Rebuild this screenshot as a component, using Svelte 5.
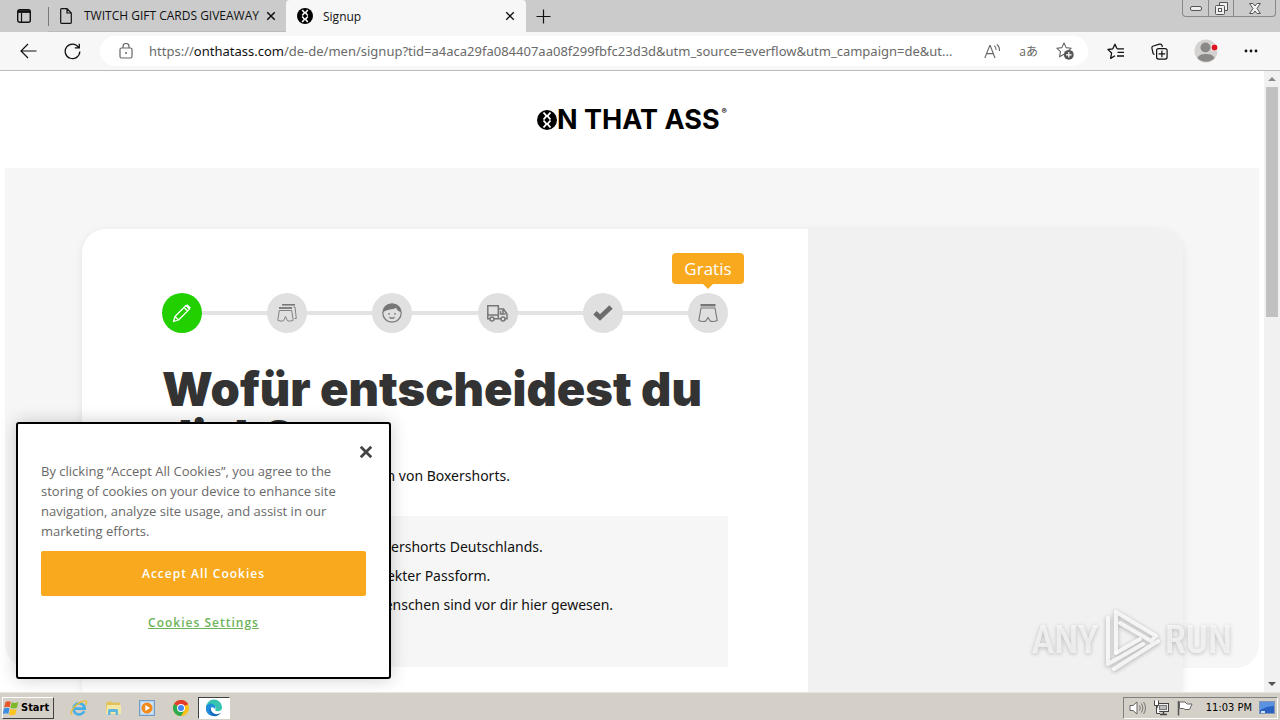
<script>
  const items = [
    'Beliebteste und bequemste Boxershorts Deutschlands.',
    'Nahtlose Verarbeitung mit perfekter Passform.',
    'Mehr als 600.000 zufriedene Menschen sind vor dir hier gewesen.'
  ];
  const steps = ['pencil', 'stack', 'face', 'truck', 'check', 'shorts'];
</script>

{#snippet badge(size)}
  <svg width={size} height={size} viewBox="0 0 20 20" aria-hidden="true">
    <circle cx="10" cy="10" r="10" fill="#000" />
    <path d="M6.500 2.500 9.500 6 6.500 9.500M13.500 2.500 10.500 6 13.500 9.500M6.500 10.500 9.500 14 6.500 17.500M13.500 10.500 10.500 14 13.500 17.500M9 6H11M9 14H11" fill="none" stroke="#fff" stroke-width="1.900" />
  </svg>
{/snippet}

{#snippet cross(size, width)}
  <svg {width} height={width} viewBox="0 0 12 12" aria-hidden="true">
    <path d="M1.5 1.5 10.5 10.5M10.5 1.5 1.5 10.5" stroke="currentColor" stroke-width={size} fill="none" />
  </svg>
{/snippet}

<div class="screen">
  <header class="tabs">
    <button class="icon-btn tab-menu" aria-label="Tab actions">
      <svg width="14" height="14" viewBox="0 0 14 14"><path d="M1 2.600H13" stroke="#111" stroke-width="2.600" /><path d="M4.500 4V13" stroke="#111" stroke-width="1.200" /><rect x=".7" y=".7" width="12.600" height="12.600" rx="2" fill="none" stroke="#111" stroke-width="1.400" /></svg>
    </button>
    <div class="tab idle">
      <svg width="12" height="16" viewBox="0 0 12 16"><path d="M.7 1.5a.8.8 0 0 1 .8-.8H7L11.3 5v9.5a.8.8 0 0 1-.8.8h-9a.8.8 0 0 1-.8-.8zM7 .7V5h4.3" fill="none" stroke="#111" stroke-width="1.2" /></svg>
      <span class="title">TWITCH GIFT CARDS GIVEAWAY</span>
      <button class="icon-btn" aria-label="Close tab">{@render cross(1.8, 10)}</button>
    </div>
    <div class="tab active">
      {@render badge(16)}
      <span class="title">Signup</span>
      <button class="icon-btn" aria-label="Close tab">{@render cross(1.6, 10)}</button>
    </div>
    <button class="icon-btn new-tab" aria-label="New tab">
      <svg width="15" height="15" viewBox="0 0 15 15"><path d="M7.5.5v14M.5 7.5h14" stroke="#111" stroke-width="1.2" /></svg>
    </button>
    <div class="window-controls">
      <button aria-label="Minimize"><svg width="12" height="5" viewBox="0 0 12 5"><rect x=".5" y=".5" width="11" height="4" rx="1.5" fill="#eee" stroke="#555" /></svg></button>
      <button aria-label="Restore"><svg width="13" height="13" viewBox="0 0 13 13"><path d="M4.5 3V.5h8v8H10" fill="#eee" stroke="#555" /><rect x=".5" y="3.500" width="9" height="9" rx="1" fill="#eee" stroke="#555" /><rect x="3.500" y="6.500" width="3" height="3" fill="#fff" stroke="#555" /></svg></button>
      <button class="wide" aria-label="Close"><svg width="12" height="11" viewBox="0 0 12 11"><path d="M.6.5H4L6 3 8 .5h3.400L8 5.500 11.400 10.500H8L6 8l-2 2.500H.6L4 5.500z" fill="#f4f4f4" stroke="#555" /></svg></button>
    </div>
  </header>

  <nav class="toolbar" aria-label="Browser">
    <button class="icon-btn back" aria-label="Back"><svg width="17" height="16" viewBox="0 0 17 16"><path d="M8 1 1 8l7 7M1 8h15.500" fill="none" stroke="#111" stroke-width="1.200" /></svg></button>
    <button class="icon-btn reload" aria-label="Reload"><svg width="17" height="17" viewBox="0 0 17 17"><path d="M14.500 4.200A7.300 7.300 0 1 0 15.800 8.500M15.300.8V4.800h-4.500" fill="none" stroke="#111" stroke-width="1.300" /></svg></button>
    <div class="address">
      <svg width="14" height="16" viewBox="0 0 14 16"><rect x="1" y="5" width="12" height="10" rx="1.500" fill="none" stroke="#666" stroke-width="1.200" /><path d="M4 5V3.500a3 3 0 0 1 6 0V5" fill="none" stroke="#666" stroke-width="1.200" /><circle cx="7" cy="10" r="1" fill="#666" /></svg>
      <span class="url">https://<b>onthatass.com</b>/de-de/men/signup?tid=a4aca29fa084407aa08f299fbfc23d3d&amp;utm_source=everflow&amp;utm_campaign=de&amp;ut...</span>
      <button class="icon-btn read" aria-label="Read aloud"><svg width="17" height="15" viewBox="0 0 17 15"><path d="M.8 14 5.800 1.500h.4L11 14M2.600 9.600H9.300M10.300 1.600a5 5 0 0 1 1.800 4.400M12.800.5a7 7 0 0 1 2.600 6.500" fill="none" stroke="#666" stroke-width="1.100" /></svg></button>
      <button class="icon-btn lang" aria-label="Translate">aあ</button>
      <button class="icon-btn" aria-label="Add to favorites"><svg width="18" height="18" viewBox="0 0 18 18"><path d="M8 .9 10.100 5.600 15.200 6.200 11.500 9.700 12.300 14 8 12.200 3.500 14.800 4.500 9.700.8 6.200 5.900 5.600z" fill="none" stroke="#666" stroke-width="1.100" stroke-linejoin="round" /><circle cx="12.800" cy="12.800" r="4.900" fill="#555" /><path d="M12.800 10v5.600M10 12.800h5.600" stroke="#fff" stroke-width="1.200" /></svg></button>
    </div>
    <div class="tools">
      <button class="icon-btn" aria-label="Favorites"><svg width="18" height="17" viewBox="0 0 18 17"><path d="M10 5.800 8 1.200 5.800 5.800 1 6.500 4.600 10 3.600 15.400 8 12.800" fill="none" stroke="#111" stroke-width="1.300" stroke-linejoin="round" /><path d="M10 5.800H17M10.500 9.400H17M10 13H17" stroke="#111" stroke-width="1.300" /></svg></button>
      <button class="icon-btn" aria-label="Collections"><svg width="17" height="17" viewBox="0 0 17 17"><path d="M3.500 11.500A2 2 0 0 1 2 10L.9 5.200A2 2 0 0 1 2.300 3L8.500 1.200A2 2 0 0 1 11 2.500L11.400 4" fill="none" stroke="#111" stroke-width="1.200" /><rect x="5.600" y="5.600" width="10.500" height="10.500" rx="2" fill="none" stroke="#111" stroke-width="1.200" /><path d="M10.900 7.500v6.700M7.500 10.900h6.700" stroke="#111" stroke-width="1.200" /></svg></button>
      <button class="icon-btn" aria-label="Profile"><svg width="24" height="24" viewBox="0 0 24 24"><circle cx="12" cy="12" r="11.500" fill="#d5d3d1" /><circle cx="11.500" cy="8.500" r="5" fill="#8b8987" /><path d="M3.500 19C5 15.500 8 15 12 15s7 .5 8.500 4A11.400 11.400 0 0 1 3.500 19z" fill="#8b8987" /><circle cx="20.500" cy="8.500" r="3.500" fill="#fff" /><circle cx="20.500" cy="8.500" r="2.900" fill="#e0141e" /></svg></button>
      <button class="icon-btn" aria-label="More"><svg width="14" height="4" viewBox="0 0 14 4"><g fill="#111"><circle cx="2" cy="2" r="1.400" /><circle cx="7" cy="2" r="1.400" /><circle cx="12" cy="2" r="1.400" /></g></svg></button>
    </div>
  </nav>

  <div class="viewport">
    <div class="page">
      <div class="brand">{@render badge(20)}<span>N THAT ASS</span><sup>®</sup></div>
      <section class="hero">
        <div class="card">
          <main class="form">
            <ol class="steps">
              {#each steps as step, i}
                <li class:current={i === 0}>
                  {#if step === 'pencil'}
                    <svg width="20" height="20" viewBox="0 0 20 20"><path d="M3 13.500 14 2.500 17.500 6 6.500 17 1.500 18.500zM3 13.500 6.500 17M12 4.500 15.500 8" fill="none" stroke="#fff" stroke-width="1.300" stroke-linejoin="round" /><path d="M14.500 2 18 5.500" stroke="#fff" stroke-width="2.400" /></svg>
                  {:else if step === 'stack'}
                    <svg width="20" height="20" viewBox="0 0 20 20" fill="none" stroke="#777"><path d="M5 1.800H18" stroke-width="1.600" /><path d="M2 5H15" stroke-width="1.800" /><path d="M2.300 7.500.8 17.300c2 .9 4 .9 5.800.4L8.500 13.500l1.900 4.200c1.800.5 3.800.5 5.800-.4L14.700 7.500zM16.500 4H18L19.300 15.500H17.500" stroke-width=".9" /></svg>
                  {:else if step === 'face'}
                    <svg width="20" height="20" viewBox="0 0 20 20"><circle cx="10" cy="10" r="9.200" fill="none" stroke="#777" stroke-width="1.200" /><path d="M1 9.500C1.500 4 5 .8 10 .8s8.500 3.200 9 8.200C16.500 8.500 14.800 7 14 4.800 11 7 5 6 1 9.500z" fill="#777" /><circle cx="7" cy="10.800" r=".9" fill="#777" /><circle cx="13" cy="10.800" r=".9" fill="#777" /><path d="M7 13.800c1.500.8 4.500.8 6 0C12.800 16.800 7.200 16.800 7 13.800z" fill="#777" /></svg>
                  {:else if step === 'truck'}
                    <svg width="21" height="17" viewBox="0 0 21 17" fill="none" stroke="#777" stroke-width="1.500"><path d="M3 13.800H.8V.8H11.300V13.800H7M11.300 4H16.500L20 9v4.800H18M14 13.800H11.300M.8 10H11.300M13.500 6V9H18.500M16 4V9" /><circle cx="5" cy="14" r="2" /><circle cx="16" cy="14" r="2" /></svg>
                  {:else if step === 'check'}
                    <svg width="22" height="18" viewBox="0 0 22 18"><path d="M3 8.700 8 13.500 19 3" fill="none" stroke="#6c6c6c" stroke-width="4.800" /></svg>
                  {:else}
                    <svg width="20" height="20" viewBox="0 0 20 20" fill="none" stroke="#777"><path d="M2.500 2.200H17.500" stroke-width="2.400" /><path d="M3 5H17L19.200 17.500c-2.500 1.200-5 1.200-7 .6L10 14.500 7.800 18.100c-2 .6-4.500.6-7-.6z" stroke-width="1.100" /></svg>
                    <span class="tip">Gratis</span>
                  {/if}
                </li>
              {/each}
            </ol>
            <h1>Wofür entscheidest du dich?</h1>
            <p class="lead">Genieße jeden Monat neue Formen von Boxershorts.</p>
            <ul class="benefits">
              {#each items as item}<li>{item}</li>{/each}
            </ul>
          </main>
          <aside></aside>
        </div>
      </section>
    </div>
    <div class="scrollbar" aria-hidden="true">
      <svg width="8" height="4" viewBox="0 0 8 4"><path d="M0 4 4 0 8 4z" fill="#8a8a8a" /></svg>
      <div class="track"><div class="thumb"></div></div>
      <svg width="8" height="4" viewBox="0 0 8 4"><path d="M0 0 4 4 8 0z" fill="#505050" /></svg>
    </div>

    <div class="watermark" aria-hidden="true">
      <span>ANY</span>
      <svg width="60" height="66" viewBox="0 0 60 66" fill="none" stroke="#fff" stroke-opacity=".8" stroke-width="4" stroke-linejoin="round" stroke-linecap="round"><path d="M14 46V5L54 29 49 34 18 16" /><path d="M6 11V57L41 37" /><path d="M12 62 56 34M14 46 38 32" /></svg>
      <span>RUN</span>
    </div>

    <div class="cookies" role="dialog" aria-label="Cookies">
      <button class="icon-btn close" aria-label="Close">{@render cross(2.4, 14)}</button>
      <p>By clicking “Accept All Cookies”, you agree to the storing of cookies on your device to enhance site navigation, analyze site usage, and assist in our marketing efforts.</p>
      <button class="accept">Accept All Cookies</button>
      <button class="settings">Cookies Settings</button>
    </div>
  </div>

  <footer class="taskbar">
    <button class="start">
      <svg width="16" height="16" viewBox="0 0 16 16"><path d="M2.500 2Q5 .5 7.800 1.800L6.700 7.300Q4 6 1.200 7.600z" fill="#e8562a" /><path d="M8.600 2.200Q11.800 3.800 15.300 2L14 7.800Q10.800 9.200 7.500 7.800z" fill="#7db928" /><path d="M1 8.600Q4 7.200 6.500 8.400L5.300 14Q3 12.500-.3 14.200z" fill="#3c8fe0" /><path d="M7.300 8.800Q10.500 10.400 13.700 9L12.400 14.600Q9 16 6.100 14.400z" fill="#fcc41c" /></svg>
      <span>Start</span>
    </button>
    <div class="apps">
      <button aria-label="Internet Explorer"><svg width="18" height="18" viewBox="0 0 18 18"><path d="M14.200 12.200A5.600 5.600 0 1 1 14.700 9.600H5" fill="none" stroke="#45aee6" stroke-width="2.600" /><path d="M2 15.500C-.5 13 5 5 12 2.500 17 .8 17.500 3 15.500 6" fill="none" stroke="#e9bf38" stroke-width="1.400" /></svg></button>
      <button aria-label="Explorer"><svg width="18" height="16" viewBox="0 0 18 16"><path d="M2 2.500 7 1l1 1.500h8V13H2z" fill="#e0c35c" /><path d="M3 5H17V14H2z" fill="#f6e7a4" /><path d="M4 15V10.500Q4 9 5.500 9h7Q14 9 14 10.500V15H11.500V12H6.500V15z" fill="#5fb7dd" /></svg></button>
      <button aria-label="Media Player"><svg width="16" height="16" viewBox="0 0 16 16"><rect x=".5" y=".5" width="15" height="15" fill="#b7d3ec" stroke="#6f9cc8" /><rect x="2.500" y="2.500" width="11" height="11" fill="#dcebf8" /><circle cx="8" cy="8" r="5.500" fill="#f08a1c" /><path d="M6.300 5 11 8 6.300 11z" fill="#fff" /></svg></button>
      <button aria-label="Chrome"><svg width="16" height="16" viewBox="0 0 16 16"><circle cx="8" cy="8" r="8" fill="#fbc116" /><path d="M8 8 1.070 4A8 8 0 0 1 14.930 4z" fill="#e33b2e" /><path d="M8 8 1.070 4A8 8 0 0 0 8 16L11.500 10z" fill="#2da94f" /><path d="M8 4h6.930" stroke="#e33b2e" /><circle cx="8" cy="8" r="4" fill="#fff" /><circle cx="8" cy="8" r="3" fill="#4285f4" /></svg></button>
      <button class="on" aria-label="Edge"><svg width="18" height="18" viewBox="0 0 18 18"><path d="M1 9A8 8 0 0 1 17 8c.3 3-2 4.200-4.500 4.200-2 0-2.500-.8-2-1.700C11.500 8.500 10 6.500 7 6.500 4 6.500 1.500 8 1 9z" fill="#36c4b0" /><path d="M1 9C1.500 5.800 5 5 7.500 6.500 5 8 5 13 9.500 14.800c2.500.9 4.500.2 6.500-1.200A8.200 8.200 0 0 1 1 9z" fill="#1467b8" /><path d="M1 8.500C2 4 6 4 8 5.200 11 7 10.500 9 10.200 10.500 9 8 6.500 7.500 5 9.500 3.500 12 6 16 9 17 4 17 .8 13 1 8.500z" fill="#1f8fdd" /></svg></button>
    </div>
    <div class="tray">
      <svg width="17" height="16" viewBox="0 0 17 16"><path d="M1 5.500H4L8 2V14L4 10.500H1z" fill="#fff" stroke="#666" /><path d="M10.500 5.500q1.500 2.500 0 5M12.500 3.500q3 4.500 0 9M14.600 2q3.800 6 0 12" fill="none" stroke="#777" /></svg>
      <svg width="17" height="16" viewBox="0 0 17 16"><rect x="4.500" y="3.500" width="11" height="8" fill="#eee" stroke="#444" /><rect x="6.500" y="5.500" width="7" height="4" fill="#bbb" stroke="#777" /><path d="M7 14.500h7M10.500 12v2" stroke="#444" stroke-width="1.500" /><path d="M1.500.500V5.500h4V.500M3.500 5.500V13.500H7" fill="#fff" stroke="#444" /></svg>
      <svg width="16" height="16" viewBox="0 0 16 16"><path d="M1.500 1V15.500" stroke="#555" stroke-width="1.500" /><path d="M2.500 2H8L10 4H15L12.500 9.500H8L6.500 8.500H2.500z" fill="#fff" stroke="#666" /></svg>
      <time>11:03 PM</time>
      <svg width="16" height="13" viewBox="0 0 16 13"><rect x=".5" y=".5" width="15" height="12" fill="#2a62c4" stroke="#8295b5" /><path d="M1 1h14v4Q8 5 1 9z" fill="#5c92e2" /><rect x="2" y="10" width="4" height="2" fill="#cfe0f8" /></svg>
    </div>
  </footer>
</div>

<style>
  :global(body) { margin: 0; }
  .screen, .screen * { box-sizing: border-box; }
  .screen { display: flex; flex-direction: column; height: 100vh; overflow: hidden; font-family: "Open Sans", "Noto Sans", sans-serif; color: #111; background: #fff; }
  svg { display: block; flex: none; }
  button { font: inherit; color: inherit; padding: 0; border: 0; background: none; cursor: pointer; }
  .icon-btn { display: grid; place-items: center; flex: none; }

  .tabs { display: flex; height: 32px; flex: none; background: #cbcbcb; font-size: 12px; }
  .tab-menu { width: 48px; }
  .tab { display: flex; align-items: center; gap: 12px; flex: 0 1 240px; min-width: 0; padding: 0 10px 0 12px; }
  .tab.idle { position: relative; flex-basis: 238px; border-bottom: 1px solid #bbb; }
  .tab.idle .title { margin-right: -8px; }
  .tab.idle::before { content: ""; position: absolute; left: 0; top: 7px; height: 19px; width: 1px; background: #777; }
  .tab.active { gap: 10px; padding: 0 11px; background: #f7f7f7; border-radius: 4px 4px 0 0; }
  .title { flex: 1; white-space: nowrap; overflow: hidden; }
  .new-tab { width: 34px; }
  .window-controls { display: flex; margin-left: auto; margin-right: 4px; height: 17px; border: 1px solid #888; border-top: 0; border-radius: 0 0 4px 4px; }
  .window-controls button { display: grid; place-items: center; width: 25px; }
  .window-controls button + button { border-left: 1px solid #888; }
  .window-controls .wide { width: 42px; }

  .toolbar { display: flex; align-items: center; height: 39px; flex: none; background: #f7f7f7; border-bottom: 1px solid #bbb; padding: 0 22px 0 20px; }
  .back { width: 17px; }
  .reload { width: 17px; margin: 0 27px; }
  .address { display: flex; align-items: center; gap: 18px; flex: 1; min-width: 0; height: 30px; padding: 0 14px 0 19px; background: #fff; border-radius: 15px; margin-left: -8px; }
  .url { flex: 1; min-width: 0; margin: 0 -2px; white-space: nowrap; overflow: hidden; font-family: "Noto Sans", sans-serif; font-size: 13px; color: #6a6a6a; }
  .url b { font-weight: 400; color: #111; }
  .lang { font-family: "Open Sans", "Noto Sans CJK JP", sans-serif; font-size: 12px; color: #666; }
  .tools { display: flex; align-items: center; gap: 26px; padding-left: 19px; }

  .viewport { position: relative; display: flex; flex: 1; min-height: 0; overflow: hidden; }
  .page { flex: 1; min-width: 0; height: 100%; overflow: hidden; }
  .brand { display: flex; justify-content: center; align-items: center; height: 97px; font-family: Inter, sans-serif; font-weight: 700; font-size: 27px; color: #000; }
  .brand sup { align-self: flex-start; margin: 35px 0 0 2px; font-size: 8px; line-height: 10px; }
  .hero { height: 500px; margin: 0 5px; padding: 61px 76px 0 77px; background: #f6f6f6; border-radius: 0 0 24px 24px; }
  .card { display: grid; grid-template-columns: 726fr 375fr; min-height: 560px; border-radius: 24px; overflow: hidden; background: #fff; box-shadow: 0 2px 8px rgba(0, 0, 0, .08); }
  aside { background: #f1f1f1; }
  .form { padding: 64px 80px 0; }
  .steps { position: relative; display: flex; justify-content: space-between; margin: 0; padding: 0; list-style: none; }
  .steps::before { content: ""; position: absolute; left: 20px; right: 20px; top: 18px; height: 4px; background: #e3e3e3; }
  .steps li { position: relative; display: grid; place-items: center; width: 40px; height: 40px; border-radius: 50%; background: #e0e0e0; }
  .steps .current { background: #22d000; }
  .tip { position: absolute; left: -16px; bottom: 49px; width: 72px; height: 31px; border-radius: 4px; background: #f9a91e; color: #fff; font-size: 17px; line-height: 31px; text-align: center; }
  .tip::after { content: ""; position: absolute; left: 30px; top: 30px; border: 6px solid transparent; border-bottom: 0; border-top-color: #f9a91e; }
  h1 { margin: 32px 0 0; font: 900 47px/48px Inter, sans-serif; color: #333; }
  .lead { margin: 3px 0 28px; font-family: "Noto Sans", sans-serif; font-size: 14px; line-height: 24px; }
  .benefits { margin: 0; padding: 16px 20px 48px; list-style: none; background: #f6f6f6; font-family: "Noto Sans", sans-serif; font-size: 14px; line-height: 29px; }

  .scrollbar { display: flex; flex-direction: column; align-items: center; width: 16px; padding: 6px 0; background: #f1f1f1; }
  .track { flex: 1; width: 12px; margin: 6px 0; }
  .thumb { height: 39%; background: #c1c1c1; }

  .watermark { position: absolute; right: 48px; bottom: 19px; display: flex; align-items: center; gap: 3px; color: rgba(255, 255, 255, .65); font: 500 39px/66px "Roboto Condensed", Roboto, sans-serif; filter: drop-shadow(0 1px 2px rgba(0, 0, 0, .35)); }

  .cookies { position: absolute; left: 16px; bottom: 13px; width: 375px; padding: 37px 23px 44px; border: 2px solid #000; border-radius: 3px; background: #fff; box-shadow: 0 0 18px rgba(0, 0, 0, .2); font-size: 13px; }
  .close { position: absolute; right: 16px; top: 21px; color: #444; }
  .cookies p { margin: 0 0 10px; line-height: 20px; color: #696969; }
  .accept, .settings { display: block; font-size: 12px; font-weight: 600; letter-spacing: 1px; }
  .accept { width: 100%; height: 45px; border-radius: 2px; background: #f9a91e; color: #fff; }
  .settings { margin: 17px auto 0; line-height: 20px; color: #6cb35a; text-decoration: underline; }

  .taskbar { display: flex; align-items: center; height: 28px; flex: none; padding: 2px 2px 0; background: #d4d0c8; border-top: 1px solid #e8e6e0; font: 11px "DejaVu Sans Condensed", "DejaVu Sans", sans-serif; color: #000; }
  .start { display: flex; align-items: center; gap: 2px; width: 52px; height: 22px; border: 1px solid; border-color: #fff #404040 #404040 #fff; font-weight: 700; }
  .apps { display: flex; margin-left: 8px; }
  .apps button { display: grid; place-items: center; width: 34px; height: 22px; }
  .apps .on { width: 32px; background: #fff; border: 1px solid; border-color: #404040 #fff #fff #404040; }
  .tray { display: flex; align-items: center; gap: 7px; height: 22px; margin-left: auto; padding: 0 2px 0 5px; border: 1px solid; border-color: #808080 #fff #fff #808080; }
  .tray time { margin-left: 6px; }
</style>
